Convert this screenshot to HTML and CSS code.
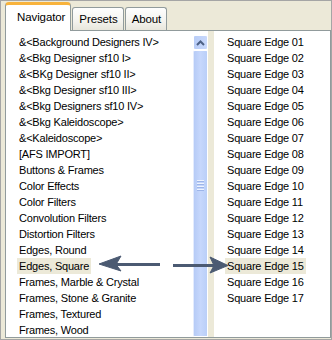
FILE: index.html
```html
<!DOCTYPE html>
<html lang="en">
<head>
    <meta charset="UTF-8">
    <title>Navigator</title>
    <link rel="stylesheet" href="styles.css">
</head>
<body>
    <div class="window">
        <div class="tabs">
            <div class="tab active">Navigator</div>
            <div class="tab">Presets</div>
            <div class="tab">About</div>
        </div>
        <div class="panel">
            <ul class="list categories">
                <li><span>&amp;&lt;Background Designers IV&gt;</span></li>
                <li><span>&amp;&lt;Bkg Designer sf10 I&gt;</span></li>
                <li><span>&amp;&lt;BKg Designer sf10 II&gt;</span></li>
                <li><span>&amp;&lt;Bkg Designer sf10 III&gt;</span></li>
                <li><span>&amp;&lt;Bkg Designers sf10 IV&gt;</span></li>
                <li><span>&amp;&lt;Bkg Kaleidoscope&gt;</span></li>
                <li><span>&amp;&lt;Kaleidoscope&gt;</span></li>
                <li><span>[AFS IMPORT]</span></li>
                <li><span>Buttons &amp; Frames</span></li>
                <li><span>Color Effects</span></li>
                <li><span>Color Filters</span></li>
                <li><span>Convolution Filters</span></li>
                <li><span>Distortion Filters</span></li>
                <li><span>Edges, Round</span></li>
                <li class="selected"><span>Edges, Square</span></li>
                <li><span>Frames, Marble &amp; Crystal</span></li>
                <li><span>Frames, Stone &amp; Granite</span></li>
                <li><span>Frames, Textured</span></li>
                <li><span>Frames, Wood</span></li>
            </ul>
            <div class="scrollbar">
                <div class="scroll-btn">
                    <svg width="9" height="6" viewBox="0 0 9 6">
                        <polyline points="1 5 4.5 1.5 8 5" fill="none" stroke="#4d6185" stroke-width="2"></polyline>
                    </svg>
                </div>
                <div class="thumb">
                    <div class="grip"><i></i><i></i><i></i><i></i></div>
                </div>
            </div>
            <div class="splitter"></div>
            <ul class="list filters">
                <li><span>Square Edge 01</span></li>
                <li><span>Square Edge 02</span></li>
                <li><span>Square Edge 03</span></li>
                <li><span>Square Edge 04</span></li>
                <li><span>Square Edge 05</span></li>
                <li><span>Square Edge 06</span></li>
                <li><span>Square Edge 07</span></li>
                <li><span>Square Edge 08</span></li>
                <li><span>Square Edge 09</span></li>
                <li><span>Square Edge 10</span></li>
                <li><span>Square Edge 11</span></li>
                <li><span>Square Edge 12</span></li>
                <li><span>Square Edge 13</span></li>
                <li><span>Square Edge 14</span></li>
                <li class="selected"><span>Square Edge 15</span></li>
                <li><span>Square Edge 16</span></li>
                <li><span>Square Edge 17</span></li>
            </ul>
        </div>

        <!-- annotation arrows -->
        <svg class="arrows" width="332" height="340" viewBox="0 0 332 340">
            <g fill="#4b5a72" stroke="#4b5a72">
                <line x1="160" y1="264.5" x2="112" y2="264.5" stroke-width="3"></line>
                <path d="M99 264 L121 256 L116 264.5 L121 271 Z" stroke-width="1"></path>
                <line x1="173" y1="265.5" x2="216" y2="265.5" stroke-width="3"></line>
                <path d="M228 265.5 L210 257 L214 265.5 L210 273 Z" stroke-width="1"></path>
            </g>
        </svg>
    </div>
</body>
</html>
```

FILE: styles.css
```css
body {
  margin: 0;
  background: #fff;
  font-family: 'Liberation Sans', Arial, sans-serif;
  font-size: 11px;
  color: #000;
}

.window {
  position: relative;
  width: 332px;
  height: 340px;
  box-sizing: border-box;
  border: 1px solid #a5a5a5;
  background: #ece9d8;
  padding: 0 0 1px 4px;
  display: flex;
  flex-direction: column;
}

.tabs {
  height: 29px;
  display: flex;
  align-items: flex-end;
  position: relative;
  z-index: 1;
}

.tab {
  height: 23px;
  box-sizing: border-box;
  padding: 5px 5px 0 6px;
  margin-right: 1px;
  border: 1px solid #919b9c;
  border-bottom: none;
  border-radius: 3px 3px 0 0;
  background: linear-gradient(#fefefe, #f4f3ee 60%, #e8e6dc);
  font-size: 11.5px;
  letter-spacing: -0.1px;
}

.tab.active {
  height: 29px;
  margin-bottom: -1px;
  padding: 6px 5px 0 11px;
  background: #fff;
  border-top: 3px solid #f8b33c;
  border-radius: 4px 4px 0 0;
}

.panel {
  flex: 1;
  display: flex;
  border: 1px solid #919b9c;
  background: #fff;
  min-height: 0;
  overflow: hidden;
}

.list {
  list-style: none;
  margin: 0;
  padding: 3px 0 0 11px;
  line-height: 16px;
  white-space: nowrap;
  font-size: 11px;
  letter-spacing: -0.2px;
}

.list li span {
  display: inline-block;
  padding: 0 2px;
}

.list li.selected span {
  background: #ece9d8;
}

.categories {
  width: 175px;
  overflow: hidden;
}

.scrollbar {
  width: 15px;
  margin: 4px 0 0 1px;
  display: flex;
  flex-direction: column;
}

.scroll-btn {
  height: 15px;
  box-sizing: border-box;
  border: 1px solid #fff;
  border-radius: 2px;
  background: linear-gradient(90deg, #b9cdf7, #c8d8fb);
  display: flex;
  justify-content: center;
  align-items: center;
}

.thumb {
  flex: 1;
  box-sizing: border-box;
  border: 1px solid #fff;
  border-left-color: #e3ebfd;
  border-radius: 2px;
  background: linear-gradient(90deg, #b6cbf6, #c6d7fc 50%, #bacff8);
  display: flex;
  justify-content: center;
  align-items: center;
}

.grip {
  display: flex;
  flex-direction: column;
  gap: 1px;
  margin-top: -16px;
}

.grip i {
  width: 7px;
  height: 1px;
  background: #eef3fe;
  border-bottom: 1px solid #9db5e9;
}

.splitter {
  width: 6px;
  background: #ece9d8;
}

.filters {
  flex: 1;
}

.arrows {
  position: absolute;
  top: -1px;
  left: -1px;
  z-index: 2;
}
```
